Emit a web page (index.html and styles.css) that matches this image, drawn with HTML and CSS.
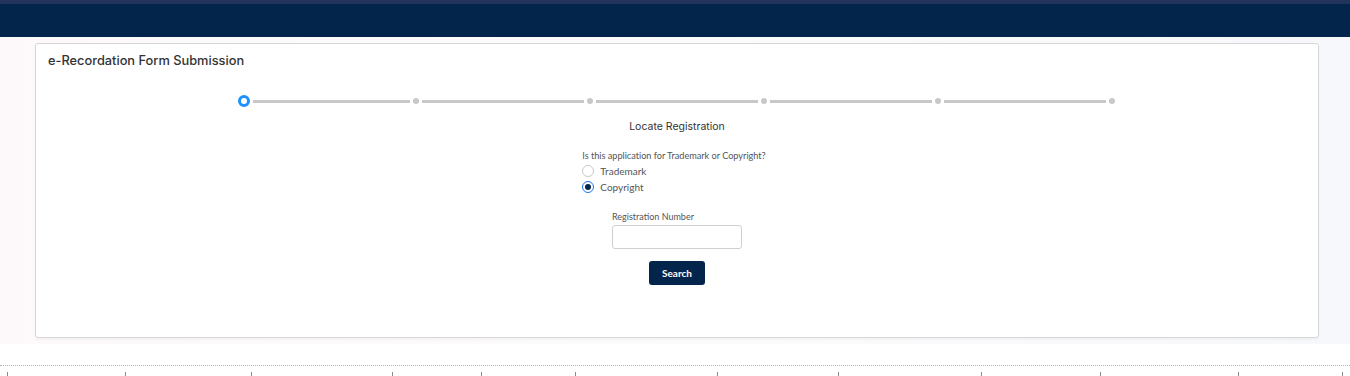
FILE: index.html
```html
<!DOCTYPE html>
<html lang="en">
	<head>
		<meta charset="UTF-8">
		<title>e-Recordation Form Submission</title>
		<link rel="stylesheet" href="styles.css">
	</head>
	<body>
		<div class="topbar"></div>
		<div class="page">
			<div class="card">
				<h1 class="card-title">e-Recordation Form Submission</h1>
				<div class="stepper">
					<span class="step current"></span>
					<span class="line first"></span>
					<span class="step"></span>
					<span class="line"></span>
					<span class="step"></span>
					<span class="line"></span>
					<span class="step"></span>
					<span class="line"></span>
					<span class="step"></span>
					<span class="line"></span>
					<span class="step"></span>
				</div>
				<h2 class="step-title">Locate Registration</h2>
				<div class="question">
					<div class="question-text">Is this application for Trademark or Copyright?</div>
					<label class="radio"><span class="radio-dot"></span>Trademark</label>
					<label class="radio"><span class="radio-dot checked"></span>Copyright</label>
				</div>
				<div class="field">
					<div class="field-label">Registration Number</div>
					<input type="text" class="field-input">
				</div>
				<button class="search-button">Search</button>
			</div>
		</div>
		<div class="footer">
			<div class="dots"></div>
			<div class="ticks">
				<span></span><span></span><span></span><span></span><span></span><span></span>
				<span></span><span></span><span></span><span></span><span></span><span></span>
			</div>
		</div>
	</body>
</html>
```

FILE: styles.css
```css
html {
	font-family: "Lato", "Liberation Sans", sans-serif;
}

body {
	margin: 0;
	background-color: #ffffff;
}

.topbar {
	height: 33px;
	border-top: 4px solid #22345a;
	background-color: #03244b;
}

.page {
	background: linear-gradient(90deg, #fdf9fa 0%, #fcfbfc 50%, #f7f8fb 100%);
	padding: 6px 31px 6px 35px;
}

.card {
	height: 293px;
	background-color: white;
	border: 1px solid #d6d6d6;
	border-radius: 3px;
	box-shadow: 0 2px 2px rgba(0, 0, 0, 0.03);
	display: flex;
	flex-direction: column;
	align-items: center;
}

.card-title {
	align-self: flex-start;
	margin: 9px 0 0 12px;
	font-family: "Inter", sans-serif;
	font-size: 12.8px;
	font-weight: 500;
	color: #333;
}

.stepper {
	display: flex;
	align-items: center;
	margin-top: 27px;
	margin-right: 2px;
}

.step {
	width: 6px;
	height: 6px;
	border-radius: 50%;
	background-color: #c8c8c8;
}

.step.current {
	width: 6px;
	height: 6px;
	border: 3px solid #1e90ff;
	background-color: white;
}

.line {
	width: 162px;
	height: 3px;
	margin: 0 3px;
	background-color: #c8c8c8;
}

.line.first {
	width: 157px;
}

.step-title {
	margin: 13px 0 0 0;
	font-family: "Inter", sans-serif;
	font-size: 10.5px;
	font-weight: 400;
	color: #333;
}

.question {
	margin-top: 17px;
	font-size: 9.2px;
	color: #555;
	display: flex;
	flex-direction: column;
	margin-right: 6px;
}

.question-text {
	margin-bottom: 2px;
	letter-spacing: -0.03px;
}

.radio {
	display: flex;
	align-items: center;
	height: 16px;
	font-size: 10px;
	color: #555;
}

.radio-dot {
	box-sizing: border-box;
	width: 12px;
	height: 12px;
	border: 1px solid #c9c9c9;
	border-radius: 50%;
	margin-right: 6px;
	position: relative;
}

.radio-dot.checked {
	border-color: #1d73e8;
}

.radio-dot.checked::after {
	content: "";
	position: absolute;
	left: 2px;
	top: 2px;
	width: 6px;
	height: 6px;
	border-radius: 50%;
	background-color: #03244b;
}

.field {
	margin-top: 16px;
	display: flex;
	flex-direction: column;
}

.field-label {
	font-size: 9px;
	color: #555;
	margin-bottom: 3px;
}

.field-input {
	box-sizing: border-box;
	width: 130px;
	height: 24px;
	border: 1px solid #cfcfcf;
	border-radius: 3px;
}

.search-button {
	margin-top: 12px;
	width: 56px;
	height: 24px;
	border: none;
	border-radius: 3px;
	background-color: #03244b;
	color: white;
	font-family: "Lato", sans-serif;
	font-size: 10px;
	font-weight: bold;
}

.footer {
	padding-top: 21px;
}

.dots {
	border-top: 1px dotted #b5b5b5;
}

.ticks {
	display: grid;
	grid-template-columns: 118px 126px 141px 89px 94px 142px 121px 143px 119px 138px 104px 1fr;
	height: 5px;
	margin-top: 6px;
	padding-left: 7px;
}

.ticks span {
	border-left: 1px solid #8a8a8a;
}
```
